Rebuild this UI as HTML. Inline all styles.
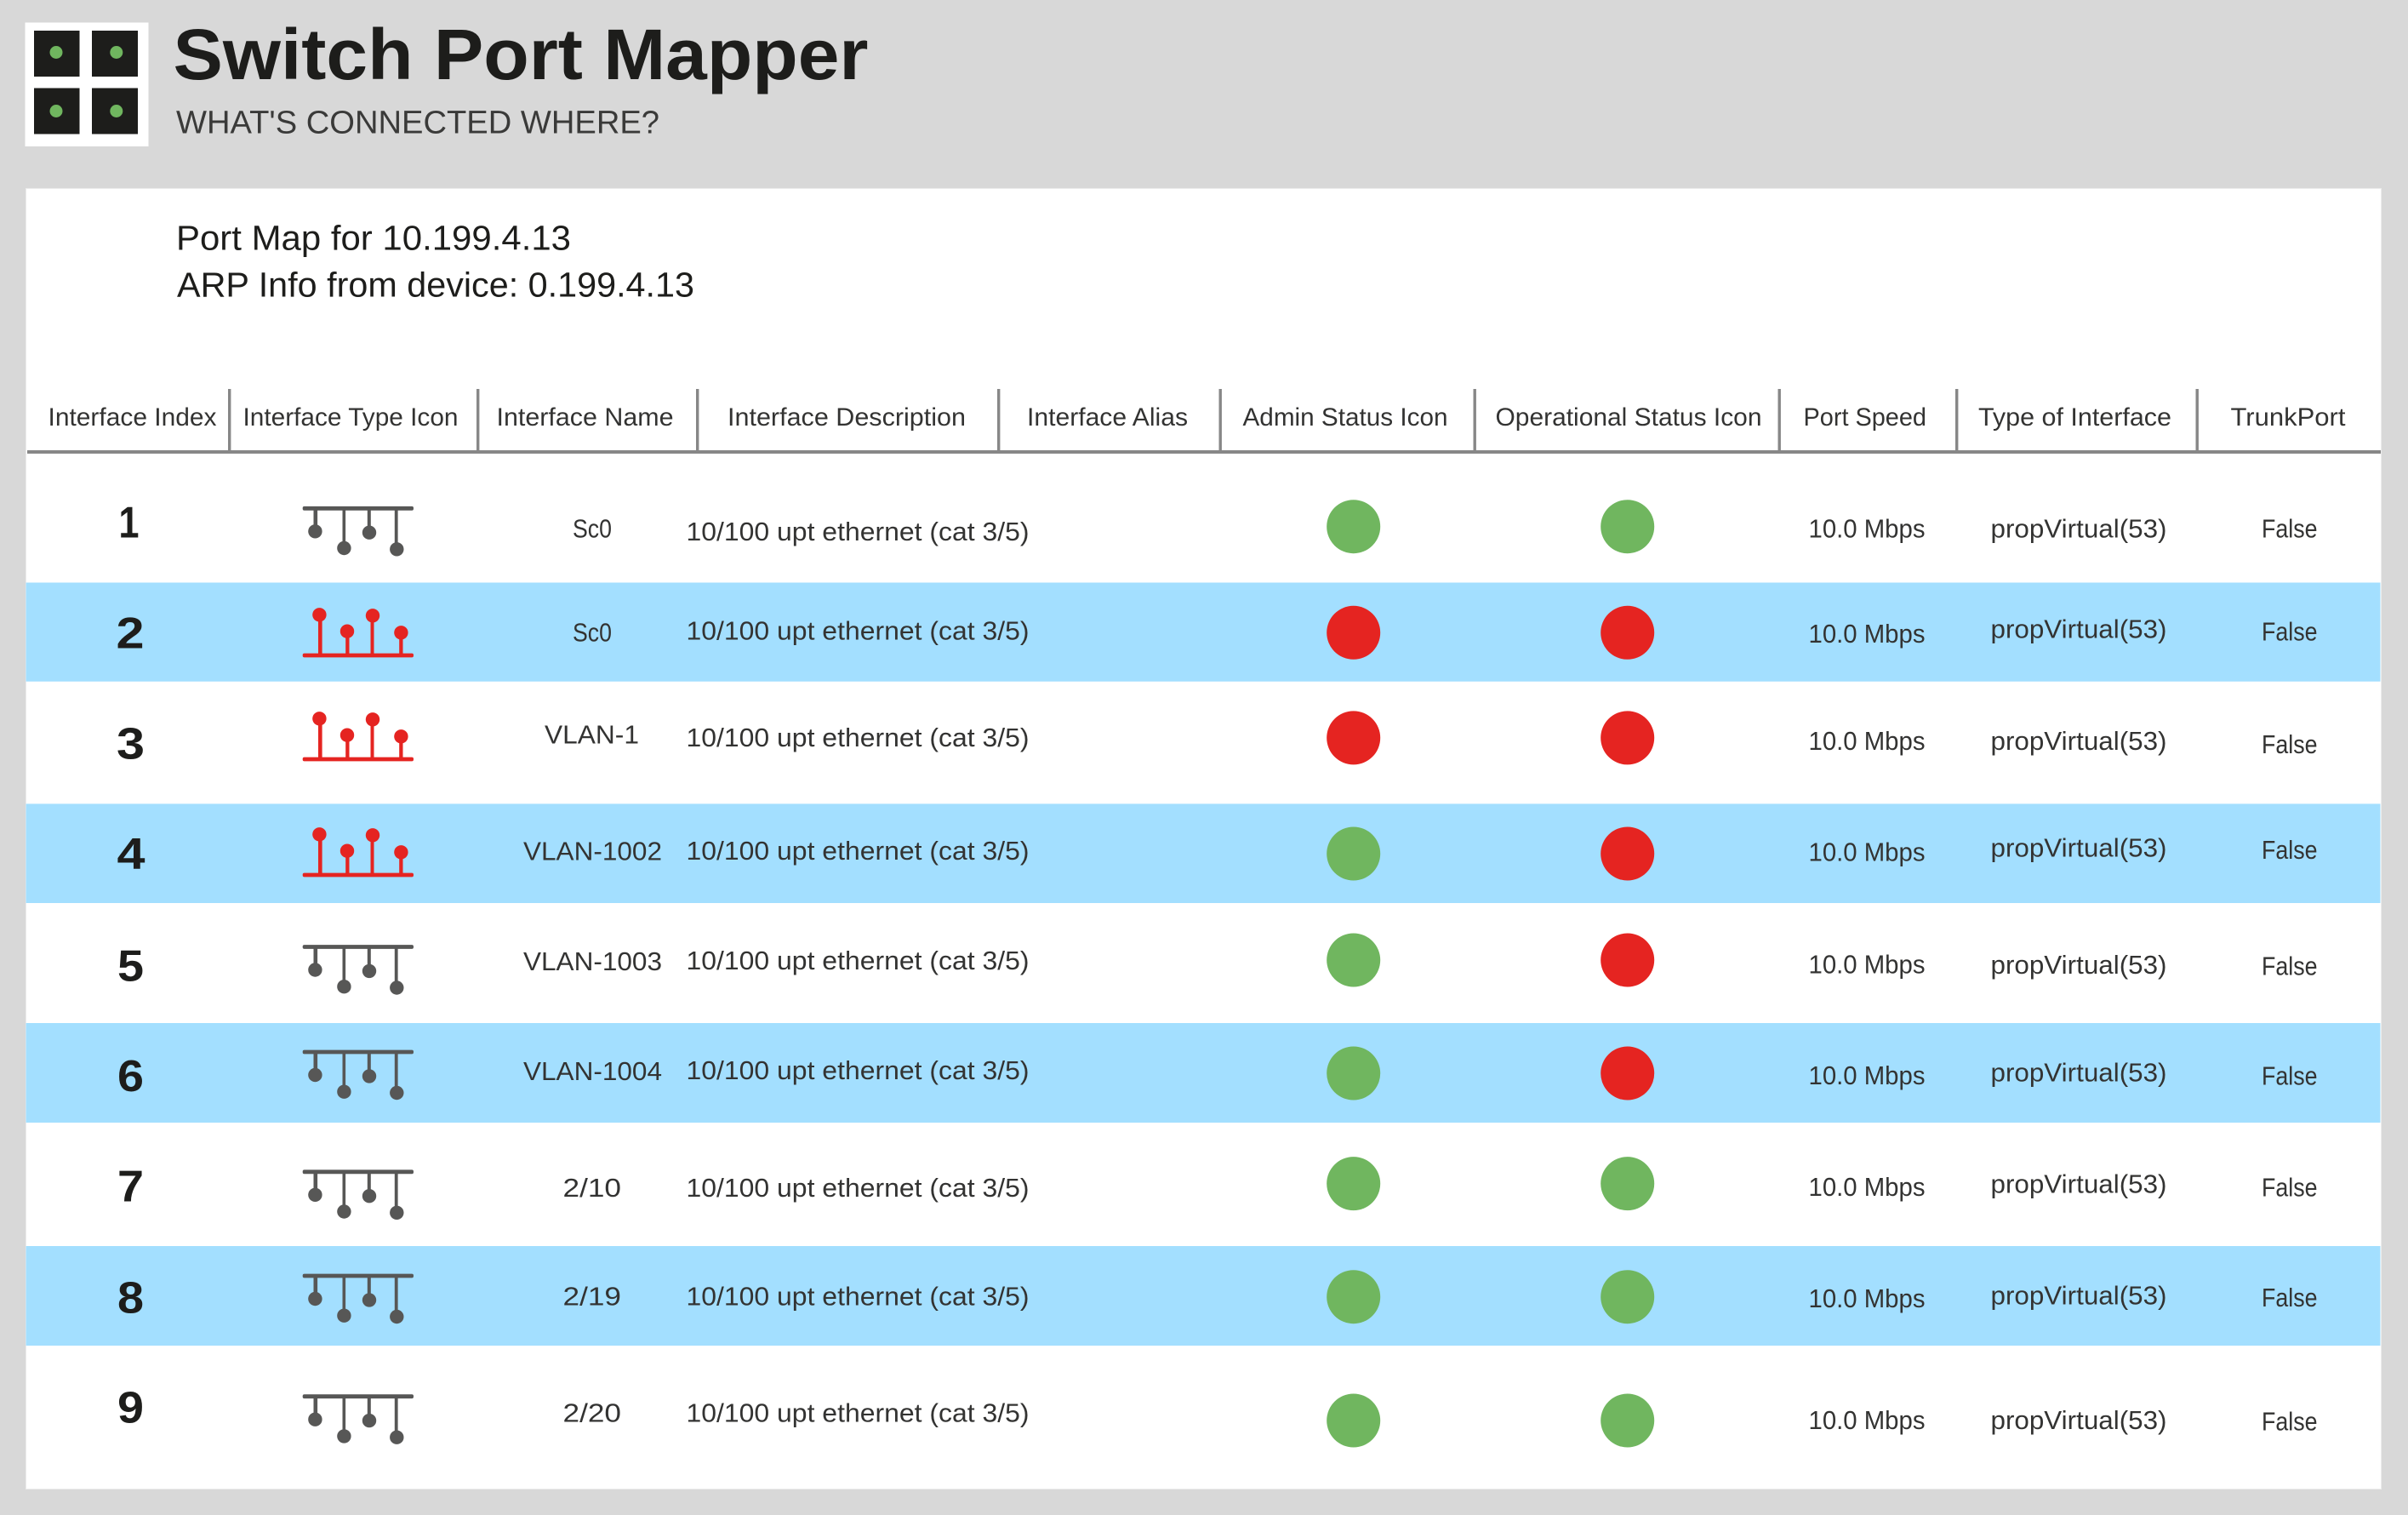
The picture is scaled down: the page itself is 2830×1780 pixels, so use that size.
<!DOCTYPE html>
<html lang="en">
<head>
<meta charset="utf-8">
<title>Switch Port Mapper</title>
<style>
html,body{margin:0;padding:0;width:2830px;height:1780px;overflow:hidden;background:#d8d8d8}
svg{display:block}
text{font-family:"Liberation Sans",sans-serif;fill:#1d1d1b}
.b{font-size:31px;fill:#333332}
.h{font-size:30px;fill:#333332}
.n{font-size:52px;font-weight:bold;text-anchor:middle}
</style>
</head>
<body>
<svg width="2830" height="1780" viewBox="0 0 2830 1780" xmlns="http://www.w3.org/2000/svg">
<defs>
<g id="gi" fill="#575756">
<rect x="355.7" y="-2.4" width="130.3" height="4.8" rx="2"/>
<rect x="368.5" y="0" width="4.6" height="27"/>
<rect x="402.5" y="0" width="3.6" height="46"/>
<rect x="431.8" y="0" width="4" height="28"/>
<rect x="463.8" y="0" width="3.8" height="48"/>
<circle cx="370.4" cy="27" r="8.2"/>
<circle cx="404.4" cy="46.7" r="8.2"/>
<circle cx="434" cy="28.4" r="8.2"/>
<circle cx="466.3" cy="48" r="8.2"/>
</g>
<g id="ri" fill="#e52421">
<rect x="355.7" y="-2.4" width="130.3" height="4.8" rx="2"/>
<rect x="374" y="-47" width="4.6" height="47"/>
<rect x="406.2" y="-28" width="4.3" height="28"/>
<rect x="435.5" y="-46" width="4" height="46"/>
<rect x="469.2" y="-26" width="4.3" height="26"/>
<circle cx="375.4" cy="-47.7" r="8.2"/>
<circle cx="408" cy="-28.3" r="8.2"/>
<circle cx="438" cy="-46.7" r="8.2"/>
<circle cx="471.4" cy="-26.7" r="8.2"/>
</g>
</defs>

<rect width="2830" height="1780" fill="#d8d8d8"/>

<!-- logo -->
<rect x="29.5" y="26.5" width="145" height="145.5" fill="#fff"/>
<rect x="40" y="36" width="53.5" height="54" fill="#1d1d1b"/>
<rect x="108" y="36" width="54" height="54" fill="#1d1d1b"/>
<rect x="40" y="103.5" width="53.5" height="54" fill="#1d1d1b"/>
<rect x="108" y="103.5" width="54" height="54" fill="#1d1d1b"/>
<circle cx="66" cy="61.5" r="7.5" fill="#70b65f"/>
<circle cx="136.8" cy="61.5" r="7.5" fill="#70b65f"/>
<circle cx="66" cy="130.5" r="7.5" fill="#70b65f"/>
<circle cx="136.8" cy="130.5" r="7.5" fill="#70b65f"/>

<!-- title -->
<text x="203.5" y="93" font-size="84" font-weight="bold" textLength="817" lengthAdjust="spacingAndGlyphs">Switch Port Mapper</text>
<text x="207" y="156.5" font-size="38" textLength="568" lengthAdjust="spacingAndGlyphs" style="fill:#3a3a39">WHAT'S CONNECTED WHERE?</text>

<!-- panel -->
<rect x="30" y="221" width="2769" height="1529" fill="#ececec"/>
<rect x="31" y="222" width="2767" height="1527" fill="#fff"/>

<text x="207" y="293.5" font-size="41" textLength="464" lengthAdjust="spacingAndGlyphs">Port Map for 10.199.4.13</text>
<text x="208" y="348.5" font-size="41" textLength="608" lengthAdjust="spacingAndGlyphs">ARP Info from device: 0.199.4.13</text>

<!-- header -->
<text class="h" x="56.5" y="500" textLength="198" lengthAdjust="spacingAndGlyphs">Interface Index</text>
<text class="h" x="285.5" y="500" textLength="253" lengthAdjust="spacingAndGlyphs">Interface Type Icon</text>
<text class="h" x="583.5" y="500" textLength="208" lengthAdjust="spacingAndGlyphs">Interface Name</text>
<text class="h" x="855" y="500" textLength="280" lengthAdjust="spacingAndGlyphs">Interface Description</text>
<text class="h" x="1207" y="500" textLength="189" lengthAdjust="spacingAndGlyphs">Interface Alias</text>
<text class="h" x="1460.5" y="500" textLength="241" lengthAdjust="spacingAndGlyphs">Admin Status Icon</text>
<text class="h" x="1757.5" y="500" textLength="313" lengthAdjust="spacingAndGlyphs">Operational Status Icon</text>
<text class="h" x="2119.5" y="500" textLength="144.5" lengthAdjust="spacingAndGlyphs">Port Speed</text>
<text class="h" x="2325" y="500" textLength="227" lengthAdjust="spacingAndGlyphs">Type of Interface</text>
<text class="h" x="2621.5" y="500" textLength="135" lengthAdjust="spacingAndGlyphs">TrunkPort</text>
<g fill="#878787">
<rect x="32" y="529" width="2766" height="4"/>
<rect x="268" y="457" width="3.4" height="74"/>
<rect x="560" y="457" width="3.4" height="74"/>
<rect x="818" y="457" width="3.4" height="74"/>
<rect x="1172" y="457" width="3.4" height="74"/>
<rect x="1432.5" y="457" width="3.4" height="74"/>
<rect x="1731.5" y="457" width="3.4" height="74"/>
<rect x="2089.5" y="457" width="3.4" height="74"/>
<rect x="2298" y="457" width="3.4" height="74"/>
<rect x="2580.5" y="457" width="3.4" height="74"/>
</g>

<!-- bands -->
<g fill="#a3dfff">
<rect x="30.5" y="684.5" width="2767" height="116.2"/>
<rect x="30.5" y="944.4" width="2767" height="116.6"/>
<rect x="30.5" y="1202" width="2767" height="117"/>
<rect x="30.5" y="1464" width="2767" height="117"/>
</g>

<!-- icons -->
<use href="#gi" y="597.3"/>
<use href="#ri" y="770"/>
<use href="#ri" y="892"/>
<use href="#ri" y="1028"/>
<use href="#gi" y="1112.5"/>
<use href="#gi" y="1236"/>
<use href="#gi" y="1376.8"/>
<use href="#gi" y="1499"/>
<use href="#gi" y="1640.7"/>

<!-- index numbers -->
<text class="n" x="151.5" y="631.7" textLength="24" lengthAdjust="spacingAndGlyphs">1</text>
<text class="n" x="153" y="761.7" textLength="33" lengthAdjust="spacingAndGlyphs">2</text>
<text class="n" x="153.5" y="891.7" textLength="33" lengthAdjust="spacingAndGlyphs">3</text>
<text class="n" x="154" y="1021" textLength="33" lengthAdjust="spacingAndGlyphs">4</text>
<text class="n" x="153.5" y="1152.7" textLength="31" lengthAdjust="spacingAndGlyphs">5</text>
<text class="n" x="153.5" y="1282" textLength="31" lengthAdjust="spacingAndGlyphs">6</text>
<text class="n" x="153.5" y="1411.6" textLength="31" lengthAdjust="spacingAndGlyphs">7</text>
<text class="n" x="153.5" y="1542.7" textLength="31" lengthAdjust="spacingAndGlyphs">8</text>
<text class="n" x="153.5" y="1671.7" textLength="31" lengthAdjust="spacingAndGlyphs">9</text>

<!-- interface names -->
<text class="b" x="673" y="631.7" textLength="46" lengthAdjust="spacingAndGlyphs">Sc0</text>
<text class="b" x="673" y="753.3" textLength="46" lengthAdjust="spacingAndGlyphs">Sc0</text>
<text class="b" x="640" y="873.7" textLength="111" lengthAdjust="spacingAndGlyphs">VLAN-1</text>
<text class="b" x="615" y="1010.7" textLength="163" lengthAdjust="spacingAndGlyphs">VLAN-1002</text>
<text class="b" x="615" y="1140" textLength="163" lengthAdjust="spacingAndGlyphs">VLAN-1003</text>
<text class="b" x="615" y="1268.8" textLength="163" lengthAdjust="spacingAndGlyphs">VLAN-1004</text>
<text class="b" x="661.5" y="1405.8" textLength="68.5" lengthAdjust="spacingAndGlyphs">2/10</text>
<text class="b" x="661.5" y="1533.3" textLength="68.5" lengthAdjust="spacingAndGlyphs">2/19</text>
<text class="b" x="661.5" y="1670.7" textLength="68.5" lengthAdjust="spacingAndGlyphs">2/20</text>

<!-- descriptions -->
<text class="b" x="806.5" y="635" textLength="403" lengthAdjust="spacingAndGlyphs">10/100 upt ethernet (cat 3/5)</text>
<text class="b" x="806.5" y="751.7" textLength="403" lengthAdjust="spacingAndGlyphs">10/100 upt ethernet (cat 3/5)</text>
<text class="b" x="806.5" y="877" textLength="403" lengthAdjust="spacingAndGlyphs">10/100 upt ethernet (cat 3/5)</text>
<text class="b" x="806.5" y="1009.8" textLength="403" lengthAdjust="spacingAndGlyphs">10/100 upt ethernet (cat 3/5)</text>
<text class="b" x="806.5" y="1139" textLength="403" lengthAdjust="spacingAndGlyphs">10/100 upt ethernet (cat 3/5)</text>
<text class="b" x="806.5" y="1268" textLength="403" lengthAdjust="spacingAndGlyphs">10/100 upt ethernet (cat 3/5)</text>
<text class="b" x="806.5" y="1405.8" textLength="403" lengthAdjust="spacingAndGlyphs">10/100 upt ethernet (cat 3/5)</text>
<text class="b" x="806.5" y="1533.3" textLength="403" lengthAdjust="spacingAndGlyphs">10/100 upt ethernet (cat 3/5)</text>
<text class="b" x="806.5" y="1670.7" textLength="403" lengthAdjust="spacingAndGlyphs">10/100 upt ethernet (cat 3/5)</text>

<!-- status dots -->
<g fill="#70b65f">
<circle cx="1590.7" cy="618.7" r="31.5"/>
<circle cx="1912.7" cy="618.7" r="31.5"/>
<circle cx="1590.7" cy="1003" r="31.5"/>
<circle cx="1590.7" cy="1128" r="31.5"/>
<circle cx="1590.7" cy="1261" r="31.5"/>
<circle cx="1590.7" cy="1390.6" r="31.5"/>
<circle cx="1912.7" cy="1390.6" r="31.5"/>
<circle cx="1590.7" cy="1523.7" r="31.5"/>
<circle cx="1912.7" cy="1523.7" r="31.5"/>
<circle cx="1590.7" cy="1669" r="31.5"/>
<circle cx="1912.7" cy="1669" r="31.5"/>
</g>
<g fill="#e52421">
<circle cx="1590.7" cy="743.3" r="31.5"/>
<circle cx="1912.7" cy="743.3" r="31.5"/>
<circle cx="1590.7" cy="866.9" r="31.5"/>
<circle cx="1912.7" cy="866.9" r="31.5"/>
<circle cx="1912.7" cy="1003" r="31.5"/>
<circle cx="1912.7" cy="1128" r="31.5"/>
<circle cx="1912.7" cy="1261" r="31.5"/>
</g>

<!-- port speed -->
<text class="b" x="2125.5" y="631.7" textLength="137" lengthAdjust="spacingAndGlyphs">10.0 Mbps</text>
<text class="b" x="2125.5" y="755" textLength="137" lengthAdjust="spacingAndGlyphs">10.0 Mbps</text>
<text class="b" x="2125.5" y="881" textLength="137" lengthAdjust="spacingAndGlyphs">10.0 Mbps</text>
<text class="b" x="2125.5" y="1011.7" textLength="137" lengthAdjust="spacingAndGlyphs">10.0 Mbps</text>
<text class="b" x="2125.5" y="1143.3" textLength="137" lengthAdjust="spacingAndGlyphs">10.0 Mbps</text>
<text class="b" x="2125.5" y="1274" textLength="137" lengthAdjust="spacingAndGlyphs">10.0 Mbps</text>
<text class="b" x="2125.5" y="1405" textLength="137" lengthAdjust="spacingAndGlyphs">10.0 Mbps</text>
<text class="b" x="2125.5" y="1536" textLength="137" lengthAdjust="spacingAndGlyphs">10.0 Mbps</text>
<text class="b" x="2125.5" y="1679" textLength="137" lengthAdjust="spacingAndGlyphs">10.0 Mbps</text>

<!-- type -->
<text class="b" x="2339.5" y="631.7" textLength="207" lengthAdjust="spacingAndGlyphs">propVirtual(53)</text>
<text class="b" x="2339.5" y="749.3" textLength="207" lengthAdjust="spacingAndGlyphs">propVirtual(53)</text>
<text class="b" x="2339.5" y="881" textLength="207" lengthAdjust="spacingAndGlyphs">propVirtual(53)</text>
<text class="b" x="2339.5" y="1006.7" textLength="207" lengthAdjust="spacingAndGlyphs">propVirtual(53)</text>
<text class="b" x="2339.5" y="1144" textLength="207" lengthAdjust="spacingAndGlyphs">propVirtual(53)</text>
<text class="b" x="2339.5" y="1270.7" textLength="207" lengthAdjust="spacingAndGlyphs">propVirtual(53)</text>
<text class="b" x="2339.5" y="1401.7" textLength="207" lengthAdjust="spacingAndGlyphs">propVirtual(53)</text>
<text class="b" x="2339.5" y="1532.3" textLength="207" lengthAdjust="spacingAndGlyphs">propVirtual(53)</text>
<text class="b" x="2339.5" y="1679" textLength="207" lengthAdjust="spacingAndGlyphs">propVirtual(53)</text>

<!-- trunk -->
<text class="b" x="2658" y="631.7" textLength="65.5" lengthAdjust="spacingAndGlyphs">False</text>
<text class="b" x="2658" y="752.7" textLength="65.5" lengthAdjust="spacingAndGlyphs">False</text>
<text class="b" x="2658" y="885" textLength="65.5" lengthAdjust="spacingAndGlyphs">False</text>
<text class="b" x="2658" y="1009" textLength="65.5" lengthAdjust="spacingAndGlyphs">False</text>
<text class="b" x="2658" y="1145.7" textLength="65.5" lengthAdjust="spacingAndGlyphs">False</text>
<text class="b" x="2658" y="1274.7" textLength="65.5" lengthAdjust="spacingAndGlyphs">False</text>
<text class="b" x="2658" y="1405.7" textLength="65.5" lengthAdjust="spacingAndGlyphs">False</text>
<text class="b" x="2658" y="1535" textLength="65.5" lengthAdjust="spacingAndGlyphs">False</text>
<text class="b" x="2658" y="1680.7" textLength="65.5" lengthAdjust="spacingAndGlyphs">False</text>
</svg>
</body>
</html>
